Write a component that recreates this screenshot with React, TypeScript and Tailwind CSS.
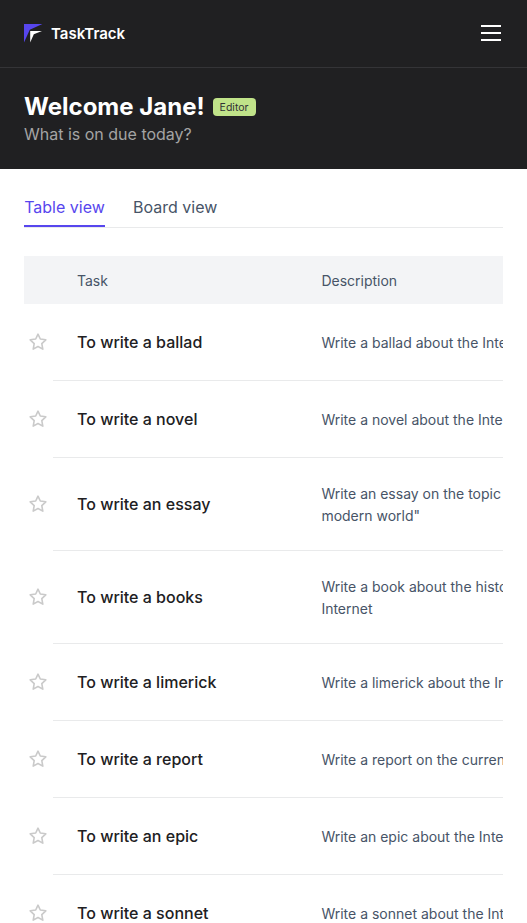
type Task = { title: string; description: string[] };

const tasks: Task[] = [
  { title: "To write a ballad", description: ["Write a ballad about the Internet"] },
  { title: "To write a novel", description: ["Write a novel about the Internet"] },
  { title: "To write an essay", description: ["Write an essay on the topic \"The", "modern world\""] },
  { title: "To write a books", description: ["Write a book about the history of", "Internet"] },
  { title: "To write a limerick", description: ["Write a limerick about the Internet"] },
  { title: "To write a report", description: ["Write a report on the current state"] },
  { title: "To write an epic", description: ["Write an epic about the Internet"] },
  { title: "To write a sonnet", description: ["Write a sonnet about the Internet"] },
];

function Logo() {
  return (
    <svg width="19" height="19" viewBox="0 0 19 19" aria-hidden="true">
      <path d="M0 0H18.4L5.8 5.8L0 18.4Z" fill="#5746ee" />
      <path d="M6.2 7H18L9.8 10.2L6.2 18.4Z" fill="#fff" />
    </svg>
  );
}

function Star() {
  return (
    <svg
      className="size-5 shrink-0"
      viewBox="0 0 20 20"
      fill="none"
      stroke="#cacaca"
      strokeWidth="1.6"
      strokeLinejoin="round"
      aria-hidden="true"
    >
      <path d="M10 2.1L12.3 7L17.8 7.8L13.8 11.6L14.8 17.1L10 14.5L5.2 17.1L6.2 11.6L2.2 7.8L7.7 7Z" />
    </svg>
  );
}

function Header() {
  return (
    <header className="bg-[#202022] text-white">
      <div className="flex h-[68px] items-center justify-between border-b border-[#343437] pl-6 pr-[26px]">
        <div className="flex items-center">
          <Logo />
          <span className="ml-2 text-[15px] leading-6 font-semibold">TaskTrack</span>
        </div>
        <button aria-label="Menu" className="flex w-5 flex-col gap-[5px] pb-0.5">
          <span className="h-0.5 w-full bg-white" />
          <span className="h-0.5 w-full bg-white" />
          <span className="h-0.5 w-full bg-white" />
        </button>
      </div>
      <div className="h-[101px] px-6 pt-[23px]">
        <div className="flex h-[31px] items-center">
          <h1 className="pt-px text-2xl font-bold">Welcome Jane!</h1>
          <span className="ml-2 flex h-[18px] w-[43px] items-center justify-center rounded bg-[#c0e389] pt-0.5 text-[10.5px] leading-4 text-[#303135]">
            Editor
          </span>
        </div>
        <p className="text-base text-[#a4a4a4]">What is on due today?</p>
      </div>
    </header>
  );
}

function TaskRow({ title, description }: Task) {
  return (
    <div className="flex w-[760px]">
      <div className="flex w-[29px] items-center justify-end pr-[5px] pb-px">
        <Star />
      </div>
      <div className="flex grow items-center border-b border-[#e9eaeb] py-6 pl-6">
        <div className="w-[244.4px] text-base leading-7 font-medium text-[#202022]">{title}</div>
        <div className="-mb-px pt-px text-sm leading-[22px] text-[#475467]">
          {description.map((line) => (
            <p key={line} className="whitespace-nowrap">{line}</p>
          ))}
        </div>
      </div>
    </div>
  );
}

export default function App() {
  return (
    <div className="h-[923px] overflow-hidden bg-white font-[Inter,sans-serif]">
      <Header />
      <main className="px-6 pt-[26px]">
        <nav className="flex h-[33px] gap-7 border-b border-[#e9eaeb] text-base">
          <button className="h-8 w-[81px] border-b-2 border-[#5746ee] pb-1.5 whitespace-nowrap text-[#5746ee]">Table view</button>
          <button className="h-8 border-b-2 border-transparent pb-1.5 text-[#475467]">Board view</button>
        </nav>
        <section className="mt-7 overflow-hidden">
          <div className="flex h-12 w-[760px] items-center bg-[#f3f4f6] pt-0.5 pl-[53px] text-sm text-[#475467]">
            <div className="w-[244.4px]">Task</div>
            <div>Description</div>
          </div>
          {tasks.map((task) => (
            <TaskRow key={task.title} {...task} />
          ))}
        </section>
      </main>
    </div>
  );
}
